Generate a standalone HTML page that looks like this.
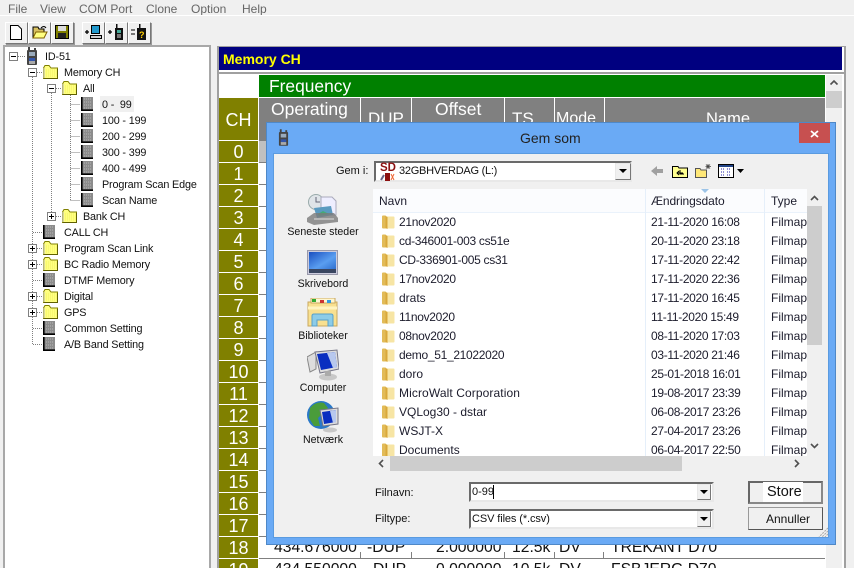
<!DOCTYPE html>
<html><head><meta charset="utf-8"><style>
html,body{margin:0;padding:0;background:#f0f0f0}
#r{position:relative;width:854px;height:568px;overflow:hidden;background:#f0f0f0;font-family:"Liberation Sans",sans-serif;font-size:12px;color:#111}
#r div,#r span,#r svg{position:absolute}
.t{white-space:nowrap;line-height:14px}
.m{color:#666;top:2px;font-size:12px}
.tb{top:22px;width:21px;height:20px;background:#f0f0f0;border:1px solid;border-color:#fff #777 #777 #fff;box-shadow:1px 1px 0 #999}
.tr{font-size:10.8px;letter-spacing:-.15px;color:#111;margin-top:1px}
.ch{left:219px;width:39px;height:21px;background:#808000;color:#fff;font-size:18px;line-height:22px;text-align:center}
.rl{left:259px;width:566px;height:1px;background:#808080}
.hd{top:98px;height:43px;background:#808080}
.ht{color:#fff;font-size:17.5px;line-height:20px;white-space:nowrap}
.v{font-size:15.7px;color:#111;white-space:nowrap;line-height:18px}
.n,.d,.y{white-space:nowrap;line-height:14px;color:#1c1c2c;font-size:12px}
.n{left:399px}.d{left:651px;letter-spacing:-.33px}.y{left:771px;width:36px;overflow:hidden}
.q{letter-spacing:-.3px}
.s{text-align:center;width:90px;left:278px;line-height:14px;white-space:nowrap;font-size:10.6px;color:#111}
.sk{background:#fff;border:2px solid;border-color:#6a6a6a #e8e8e8 #e8e8e8 #6a6a6a;box-sizing:border-box}
.db{width:16px;background:#f0f0f0;border:1px solid;border-color:#e8e8e8 #777 #777 #e8e8e8;box-sizing:border-box}
</style></head><body><div id="r">
<svg width="0" height="0" style="position:absolute"><defs>
<symbol id="doc" viewBox="0 0 13 14"><rect x="0" y="0" width="12" height="13" fill="#8c8c8c"/><path d="M.8 0V13.200H12" fill="none" stroke="#000" stroke-width="1.6"/><path d="M3 2h7M3 5h7M3 8h7M3 11h7" stroke="#b8b8b8" stroke-dasharray="1 1"/></symbol>
<symbol id="fo" viewBox="0 0 15 14"><path d="M.5 3V13.500H14.500V3H8L6 .5H2z" fill="#ffff80" stroke="#808000"/><path d="M1 3V13" stroke="#c8c8a0" stroke-width="1.500"/><path d="M3 5h11M3 7h11M3 9h11M3 11h11" stroke="#f0f060" stroke-dasharray="1 1"/><path d="M1 13.500H14.500V4" fill="none" stroke="#606000"/></symbol>
<symbol id="yf" viewBox="0 0 14 14"><path d="M1 1.500Q1 .5 2 .5H4.500L5.500 1.500V13.500H2Q1 13.500 1 12.500z" fill="#e2bb58"/><path d="M5.500 1.500H12.500Q13.500 1.500 13.500 2.500V12.500Q13.500 13.500 12.500 13.500H6z" fill="#f7e5a4"/><path d="M4.500 1L6.500 2V14L4.500 13z" fill="#d9a83a"/></symbol>
<symbol id="pl" viewBox="0 0 9 9"><rect x=".5" y=".5" width="8" height="8" fill="#fff" stroke="#808080"/><path d="M2 4.500h5M4.500 2v5" stroke="#000"/></symbol>
<symbol id="mi" viewBox="0 0 9 9"><rect x=".5" y=".5" width="8" height="8" fill="#fff" stroke="#808080"/><path d="M2 4.500h5" stroke="#000"/></symbol>
<symbol id="rad" viewBox="0 0 12 18"><rect x="1" y="3" width="10" height="15" rx="1" fill="#444"/><rect x="2" y="0" width="2" height="4" fill="#444"/><rect x="8" y="1" width="2" height="3" fill="#444"/><rect x="3" y="5" width="6" height="4" fill="#9ab"/><rect x="3" y="11" width="6" height="3" fill="#35a"/><rect x="3" y="14" width="6" height="3" fill="#aaa"/></symbol>
</defs></svg>

<!-- menu -->
<span class="t m" style="left:8px">File</span><span class="t m" style="left:40px">View</span><span class="t m" style="left:79px">COM Port</span><span class="t m" style="left:146px">Clone</span><span class="t m" style="left:191px">Option</span><span class="t m" style="left:242px">Help</span>
<div style="left:0;top:15px;width:854px;height:1px;background:#fff"></div>

<!-- toolbar -->
<div class="tb" style="left:5px"></div><div class="tb" style="left:28px"></div><div class="tb" style="left:51px"></div>
<div class="tb" style="left:82px"></div><div class="tb" style="left:105px"></div><div class="tb" style="left:128px"></div>
<svg style="left:10px;top:25px" width="12" height="15"><path d="M.5.5H8L11.500 4V14.500H.5z" fill="#fff" stroke="#000"/></svg>
<svg style="left:32px;top:25px" width="16" height="14"><path d="M1 2h5l1 2h5v9H1z" fill="#d8c060" stroke="#000"/><path d="M1 13L4 7H15L12 13z" fill="#ffff80" stroke="#806000"/><path d="M9 3Q12 0 14 3" stroke="#000" fill="none"/></svg>
<svg style="left:55px;top:25px" width="14" height="14"><rect x=".5" y=".5" width="13" height="13" fill="#808000" stroke="#000"/><rect x="3" y="1" width="8" height="5" fill="#ddd"/><rect x="3" y="8" width="8" height="5" fill="#222"/></svg>
<svg style="left:84px;top:25px" width="18" height="15"><path d="M1 7h4M3 5v4" stroke="#000" stroke-width="1.300"/><rect x="7.500" y=".5" width="8" height="8" fill="#29c" stroke="#000"/><rect x="6.500" y="10.500" width="11" height="3" fill="#ccc" stroke="#000"/></svg>
<svg style="left:107px;top:24px" width="18" height="17"><path d="M1 8h4M3 6v4" stroke="#000" stroke-width="1.300"/><rect x="8" y="4" width="8" height="12" fill="#111"/><rect x="9" y="0" width="1.500" height="4" fill="#111"/><rect x="10" y="6" width="4" height="3" fill="#4a9"/><path d="M10 11h4M10 13h4" stroke="#ddd"/></svg>
<svg style="left:130px;top:24px" width="18" height="17"><path d="M1 6h4M1 10h4" stroke="#000"/><rect x="7" y="4" width="9" height="12" fill="#111"/><rect x="9" y="0" width="1.500" height="4" fill="#111"/><text x="9" y="14" font-size="9" font-weight="bold" fill="#fc0" font-family="Liberation Sans">?</text></svg>

<!-- tree panel -->
<div style="left:3px;top:45px;width:204px;height:523px;background:#fff;border:2px solid #a8a8a8"></div>

<svg style="left:0;top:0" width="210" height="360"><g stroke="#808080" stroke-dasharray="1 1" fill="none">
<path d="M18 56.500h8M32.500 77V344M51.500 93V216M70.500 104.500h10M70.500 120.500h10M70.500 136.500h10M70.500 152.500h10M70.500 168.500h10M70.500 184.500h10M70.500 200.500h10M70.500 93V200M37 72.500h6M56 88.500h6M56 216.500h6M33 232.500h10M37 248.500h6M37 264.500h6M33 280.500h10M37 296.500h6M37 312.500h6M33 328.500h10M33 344.500h10"/></g></svg>
<svg style="left:9px;top:52px" width="9" height="9"><use href="#mi"/></svg>
<svg style="left:28px;top:68px" width="9" height="9"><use href="#mi"/></svg>
<svg style="left:47px;top:84px" width="9" height="9"><use href="#mi"/></svg>
<svg style="left:47px;top:212px" width="9" height="9"><use href="#pl"/></svg>
<svg style="left:28px;top:244px" width="9" height="9"><use href="#pl"/></svg>
<svg style="left:28px;top:260px" width="9" height="9"><use href="#pl"/></svg>
<svg style="left:28px;top:292px" width="9" height="9"><use href="#pl"/></svg>
<svg style="left:28px;top:308px" width="9" height="9"><use href="#pl"/></svg>
<svg style="left:26px;top:47px" width="12" height="18"><use href="#rad"/></svg>
<svg style="left:43px;top:65px" width="15" height="14"><use href="#fo"/></svg>
<svg style="left:62px;top:81px" width="15" height="14"><use href="#fo"/></svg>
<svg style="left:62px;top:209px" width="15" height="14"><use href="#fo"/></svg>
<svg style="left:43px;top:241px" width="15" height="14"><use href="#fo"/></svg>
<svg style="left:43px;top:257px" width="15" height="14"><use href="#fo"/></svg>
<svg style="left:43px;top:289px" width="15" height="14"><use href="#fo"/></svg>
<svg style="left:43px;top:305px" width="15" height="14"><use href="#fo"/></svg>
<svg style="left:81px;top:97px" width="13" height="14"><use href="#doc"/></svg>
<svg style="left:81px;top:113px" width="13" height="14"><use href="#doc"/></svg>
<svg style="left:81px;top:129px" width="13" height="14"><use href="#doc"/></svg>
<svg style="left:81px;top:145px" width="13" height="14"><use href="#doc"/></svg>
<svg style="left:81px;top:161px" width="13" height="14"><use href="#doc"/></svg>
<svg style="left:81px;top:177px" width="13" height="14"><use href="#doc"/></svg>
<svg style="left:81px;top:193px" width="13" height="14"><use href="#doc"/></svg>
<svg style="left:43px;top:225px" width="13" height="14"><use href="#doc"/></svg>
<svg style="left:43px;top:273px" width="13" height="14"><use href="#doc"/></svg>
<svg style="left:43px;top:321px" width="13" height="14"><use href="#doc"/></svg>
<svg style="left:43px;top:337px" width="13" height="14"><use href="#doc"/></svg>
<div style="left:100px;top:96px;width:34px;height:16px;background:#f0f0f0"></div>
<span class="t tr" style="left:45px;top:49px">ID-51</span>
<span class="t tr" style="left:64px;top:65px">Memory CH</span>
<span class="t tr" style="left:83px;top:81px">All</span>
<span class="t tr" style="left:102px;top:97px">0 -&nbsp; 99</span>
<span class="t tr" style="left:102px;top:113px">100 - 199</span>
<span class="t tr" style="left:102px;top:129px">200 - 299</span>
<span class="t tr" style="left:102px;top:145px">300 - 399</span>
<span class="t tr" style="left:102px;top:161px">400 - 499</span>
<span class="t tr" style="left:102px;top:177px">Program Scan Edge</span>
<span class="t tr" style="left:102px;top:193px">Scan Name</span>
<span class="t tr" style="left:83px;top:209px">Bank CH</span>
<span class="t tr" style="left:64px;top:225px">CALL CH</span>
<span class="t tr" style="left:64px;top:241px">Program Scan Link</span>
<span class="t tr" style="left:64px;top:257px">BC Radio Memory</span>
<span class="t tr" style="left:64px;top:273px">DTMF Memory</span>
<span class="t tr" style="left:64px;top:289px">Digital</span>
<span class="t tr" style="left:64px;top:305px">GPS</span>
<span class="t tr" style="left:64px;top:321px">Common Setting</span>
<span class="t tr" style="left:64px;top:337px">A/B Band Setting</span>

<!-- right panel -->
<div style="left:217px;top:46px;height:522px;background:#fff;border-left:2px solid #a0a0a0;border-right:2px solid #a0a0a0;box-sizing:border-box;width:629px"></div>
<div style="left:217px;top:46px;width:629px;height:1px;background:#a0a0a0"></div>
<div style="left:219px;top:47px;width:623px;height:23px;background:#000080"></div>
<span class="t" style="left:223px;top:52px;color:#ff0;font-weight:bold;font-size:14px">Memory CH</span>
<div style="left:217px;top:72px;width:629px;height:2px;background:#a0a0a0"></div>
<div style="left:259px;top:75px;width:566px;height:22px;background:#008000"></div>
<span class="t" style="left:269px;top:76px;color:#fff;font-size:17.400px;line-height:20px">Frequency</span>
<div class="hd" style="left:259px;width:101px"></div>
<div class="hd" style="left:361px;width:50px"></div>
<div class="hd" style="left:412px;width:92px"></div>
<div class="hd" style="left:505px;width:49px"></div>
<div class="hd" style="left:555px;width:49px"></div>
<div class="hd" style="left:605px;width:220px"></div>
<span class="ht" style="left:271px;top:99px">Operating</span>
<span class="ht" style="left:368px;top:109px;font-size:17px">DUP</span>
<span class="ht" style="left:435px;top:99px">Offset</span>
<span class="ht" style="left:512px;top:109px;font-size:17px">TS</span>
<span class="ht" style="left:556px;top:109px;font-size:16px">Mode</span>
<span class="ht" style="left:706px;top:109px;font-size:16.500px">Name</span>
<div class="ch" style="top:98px;height:42px;line-height:44px">CH</div>
<div style="left:259px;top:141px;width:8px;height:21px;background:#c0c0c0"></div>

<div class="ch" style="top:141px">0</div><div class="ch" style="top:163px">1</div><div class="ch" style="top:185px">2</div><div class="ch" style="top:207px">3</div><div class="ch" style="top:229px">4</div><div class="ch" style="top:251px">5</div><div class="ch" style="top:273px">6</div><div class="ch" style="top:295px">7</div><div class="ch" style="top:317px">8</div><div class="ch" style="top:339px">9</div><div class="ch" style="top:361px">10</div><div class="ch" style="top:383px">11</div><div class="ch" style="top:405px">12</div><div class="ch" style="top:427px">13</div><div class="ch" style="top:449px">14</div><div class="ch" style="top:471px">15</div><div class="ch" style="top:493px">16</div><div class="ch" style="top:515px">17</div><div class="ch" style="top:537px">18</div><div class="ch" style="top:559px">19</div>
<div class="rl" style="top:162px"></div><div class="rl" style="top:184px"></div><div class="rl" style="top:206px"></div><div class="rl" style="top:228px"></div><div class="rl" style="top:250px"></div><div class="rl" style="top:272px"></div><div class="rl" style="top:294px"></div><div class="rl" style="top:316px"></div><div class="rl" style="top:338px"></div><div class="rl" style="top:360px"></div><div class="rl" style="top:382px"></div><div class="rl" style="top:404px"></div><div class="rl" style="top:426px"></div><div class="rl" style="top:448px"></div><div class="rl" style="top:470px"></div><div class="rl" style="top:492px"></div><div class="rl" style="top:514px"></div><div class="rl" style="top:536px"></div><div class="rl" style="top:558px"></div>

<span class="v" style="left:274px;top:539px">434.676000</span><span class="v" style="left:367px;top:539px">-DUP</span><span class="v" style="left:436px;top:539px">2.000000</span><span class="v" style="left:512px;top:539px">12.5k</span><span class="v" style="left:559px;top:539px">DV</span><span class="v" style="left:611px;top:539px">TREKANT D70</span>
<span class="v" style="left:274px;top:561px">434.550000</span><span class="v" style="left:373px;top:561px">DUP</span><span class="v" style="left:436px;top:561px">0.000000</span><span class="v" style="left:512px;top:561px">10.5k</span><span class="v" style="left:559px;top:561px">DV</span><span class="v" style="left:611px;top:561px">FSBJERG D70</span>
<div style="left:360px;top:552px;width:1px;height:6px;background:#808080"></div><div style="left:411px;top:552px;width:1px;height:6px;background:#808080"></div><div style="left:504px;top:552px;width:1px;height:6px;background:#808080"></div><div style="left:554px;top:552px;width:1px;height:6px;background:#808080"></div><div style="left:603px;top:552px;width:1px;height:6px;background:#808080"></div>

<!-- outer scrollbar -->
<div style="left:826px;top:75px;width:16px;height:493px;background:#f0f0f0"></div>
<div style="left:826px;top:91px;width:16px;height:17px;background:#cdcdcd"></div>
<svg style="left:829px;top:79px" width="10" height="7"><path d="M1.500 5.500L5 2L8.500 5.500" fill="none" stroke="#505050" stroke-width="1.600"/></svg>

<!-- dialog -->
<div style="left:266px;top:122px;width:570px;height:423px;background:#6aaaf5;border:1px solid #4f88c7;box-sizing:border-box"></div>
<div style="left:273px;top:153px;width:556px;height:385px;background:#f0f0f0;border:1px solid #5a9be0;box-sizing:border-box"></div>
<div style="left:799px;top:123px;width:31px;height:20px;background:#c75050"></div>
<svg style="left:810px;top:130px" width="9" height="8"><path d="M1 1L8 7M8 1L1 7" stroke="#fff" stroke-width="1.800"/></svg>
<svg style="left:278px;top:129px" width="11" height="17"><use href="#rad"/></svg>
<span class="t" style="left:520px;top:130px;font-size:14px;line-height:16px;color:#222">Gem som</span>

<span class="t" style="left:336px;top:164px;font-size:11px">Gem i:</span>
<div class="sk" style="left:374px;top:161px;width:258px;height:21px"></div>
<span class="t" style="left:380px;top:163px;font-size:11.500px;font-weight:bold;color:#8b1010;line-height:10px">SD</span>
<svg style="left:380px;top:172px" width="15" height="9"><rect x="5" y="1" width="5" height="8" fill="#8b1010"/><path d="M1 8L4 3" stroke="#668" stroke-width="2"/><path d="M11 2l3 6M14 2l-3 6" stroke="#e63" /></svg>
<span class="t" style="left:399px;top:164px;font-size:11px;letter-spacing:-.25px">32GBHVERDAG (L:)</span>
<div class="db" style="left:615px;top:163px;height:17px"></div>
<svg style="left:619px;top:169px" width="9" height="5"><path d="M0 0H8L4 4z" fill="#000"/></svg>

<svg style="left:651px;top:165px" width="13" height="12"><path d="M0 6L6 1V4H12V8H6V11z" fill="#a0a0a0"/></svg>
<svg style="left:672px;top:164px" width="16" height="14"><path d="M.5 2.500H6L7 4H15.500V13.500H.5z" fill="#ffff90" stroke="#000"/><path d="M5 9H11M7 7L5 9L7 11M5 9" stroke="#000" fill="none"/><path d="M8 6V10H12" stroke="#000" fill="none"/></svg>
<svg style="left:695px;top:163px" width="17" height="15"><path d="M.5 5.500H5L6 7H11.500V14.500H.5z" fill="#ffe878" stroke="#555"/><path d="M13 1V6M10.500 3.500H16M11 1.500L15 5.500M15 1.500L11 5.500" stroke="#444" stroke-width=".8"/></svg>
<svg style="left:718px;top:164px" width="26" height="14"><rect x=".5" y=".5" width="15" height="13" fill="#fff" stroke="#000"/><rect x="1" y="1" width="14" height="2" fill="#248"/><path d="M3 5h3M9 5h4M3 8h3M9 8h4M3 11h3M9 11h4" stroke="#22a" stroke-dasharray="1 1"/><path d="M19 5H26L22.500 9z" fill="#000"/></svg>

<!-- side places -->
<svg style="left:306px;top:193px" width="33" height="33"><circle cx="10" cy="9" r="7.500" fill="#dfe4e8" stroke="#9aa"/><path d="M10 4V9H14" stroke="#667" fill="none"/><path d="M15 4H26L30 8V22H15z" fill="#eef" stroke="#aab"/><path d="M8 15L25 13L27 22L11 25z" fill="#5a9ac0"/><path d="M12 21l5-3 6 3-10 2z" fill="#4a7"/><path d="M1 25L8 20H28L32 25V29L8 32L1 29z" fill="#7b7b7b" opacity=".8"/><path d="M8 26H28" stroke="#ddd"/></svg>
<span class="s" style="top:225px">Seneste steder</span>
<svg style="left:307px;top:250px" width="32" height="26"><rect x=".5" y=".5" width="30" height="24" fill="#ccd" stroke="#99a"/><defs><linearGradient id="g" x1="0" y1="0" x2="1" y2="1"><stop offset="0" stop-color="#1a4fc0"/><stop offset=".6" stop-color="#5a9ef0"/><stop offset="1" stop-color="#3070d0"/></linearGradient></defs><rect x="2" y="2" width="27" height="17" fill="url(#g)"/><rect x="2" y="19" width="27" height="4" fill="#3a4660"/></svg>
<span class="s" style="top:277px">Skrivebord</span>
<svg style="left:307px;top:298px" width="32" height="30"><path d="M1 4H30V28H1z" fill="#f8e090" stroke="#c8a860"/><rect x="4" y="0" width="24" height="5" fill="#fff6d0" stroke="#c8a860"/><rect x="5" y="1" width="4" height="3" fill="#3a3"/><rect x="13" y="2" width="4" height="3" fill="#c33"/><rect x="20" y="2" width="4" height="3" fill="#39d"/><path d="M1 10H30" stroke="#fff4c0" stroke-width="3"/><path d="M5 28V18Q5 16 7 16H24Q26 16 26 18V28H21V22H10V28z" fill="#8ccce8" stroke="#58a0c8"/></svg>
<span class="s" style="top:329px">Biblioteker</span>
<svg style="left:307px;top:349px" width="32" height="32"><path d="M0 8L9 3V20L3 23z" fill="#ddd" stroke="#888"/><path d="M8 3L30 1L32 20L13 24z" fill="#ddd" stroke="#778"/><path d="M10 5L28 3L30 18L14 21z" fill="#0a2ec0"/><path d="M20 4L28 3L30 18L26 19z" fill="#b8c8ee"/><ellipse cx="21" cy="28" rx="9" ry="3.500" fill="#c8c8c8"/><rect x="18" y="22" width="6" height="5" fill="#aaa"/></svg>
<span class="s" style="top:381px">Computer</span>
<svg style="left:306px;top:400px" width="33" height="33"><circle cx="15" cy="15" r="14" fill="#2a78c8"/><path d="M4 8Q10 1 18 3L22 8L12 18L14 26L8 26L3 18z" fill="#4a9c3a"/><path d="M14 10L32 8V24L17 26z" fill="#ddd" stroke="#778"/><path d="M16 12L30 10V22L18 24z" fill="#0a2ec0"/><path d="M24 11L30 10V22L27 23z" fill="#b8c8ee"/><ellipse cx="24" cy="30" rx="7" ry="2.500" fill="#c8c8c8"/></svg>
<span class="s" style="top:433px">Netværk</span>

<!-- list -->
<div style="left:373px;top:189px;width:449px;height:267px;background:#fff;overflow:hidden">
<div style="left:0;top:0;width:434px;height:23px;background:#fbfcfe"></div>
<div style="left:0;top:23px;width:434px;height:1px;background:#eaf2fb"></div>
<div style="left:272px;top:0;width:1px;height:267px;background:#e5effa"></div>
<div style="left:391px;top:0;width:1px;height:267px;background:#e5effa"></div>
</div>
<svg style="left:701px;top:189px" width="9" height="5"><path d="M0 0H8L4 4z" fill="#9cc4e8"/></svg>
<span class="n" style="left:379px;top:194px">Navn</span><span class="d" style="top:194px;letter-spacing:-.1px">Ændringsdato</span><span class="y" style="top:194px">Type</span>

<svg style="left:381px;top:215px" width="14" height="14"><use href="#yf"/></svg><span class="n q" style="top:215px">21nov2020</span><span class="d" style="top:215px">21-11-2020 16:08</span><span class="y" style="top:215px">Filmap</span>
<svg style="left:381px;top:234px" width="14" height="14"><use href="#yf"/></svg><span class="n q" style="top:234px">cd-346001-003 cs51e</span><span class="d" style="top:234px">20-11-2020 23:18</span><span class="y" style="top:234px">Filmap</span>
<svg style="left:381px;top:253px" width="14" height="14"><use href="#yf"/></svg><span class="n q" style="top:253px">CD-336901-005 cs31</span><span class="d" style="top:253px">17-11-2020 22:42</span><span class="y" style="top:253px">Filmap</span>
<svg style="left:381px;top:272px" width="14" height="14"><use href="#yf"/></svg><span class="n q" style="top:272px">17nov2020</span><span class="d" style="top:272px">17-11-2020 22:36</span><span class="y" style="top:272px">Filmap</span>
<svg style="left:381px;top:291px" width="14" height="14"><use href="#yf"/></svg><span class="n" style="top:291px">drats</span><span class="d" style="top:291px">17-11-2020 16:45</span><span class="y" style="top:291px">Filmap</span>
<svg style="left:381px;top:310px" width="14" height="14"><use href="#yf"/></svg><span class="n q" style="top:310px">11nov2020</span><span class="d" style="top:310px">11-11-2020 15:49</span><span class="y" style="top:310px">Filmap</span>
<svg style="left:381px;top:329px" width="14" height="14"><use href="#yf"/></svg><span class="n q" style="top:329px">08nov2020</span><span class="d" style="top:329px">08-11-2020 17:03</span><span class="y" style="top:329px">Filmap</span>
<svg style="left:381px;top:348px" width="14" height="14"><use href="#yf"/></svg><span class="n q" style="top:348px">demo_51_21022020</span><span class="d" style="top:348px">03-11-2020 21:46</span><span class="y" style="top:348px">Filmap</span>
<svg style="left:381px;top:367px" width="14" height="14"><use href="#yf"/></svg><span class="n" style="top:367px">doro</span><span class="d" style="top:367px">25-01-2018 16:01</span><span class="y" style="top:367px">Filmap</span>
<svg style="left:381px;top:386px" width="14" height="14"><use href="#yf"/></svg><span class="n" style="top:386px;letter-spacing:.1px">MicroWalt Corporation</span><span class="d" style="top:386px">19-08-2017 23:39</span><span class="y" style="top:386px">Filmap</span>
<svg style="left:381px;top:405px" width="14" height="14"><use href="#yf"/></svg><span class="n" style="top:405px">VQLog30 - dstar</span><span class="d" style="top:405px">06-08-2017 23:26</span><span class="y" style="top:405px">Filmap</span>
<svg style="left:381px;top:424px" width="14" height="14"><use href="#yf"/></svg><span class="n" style="top:424px">WSJT-X</span><span class="d" style="top:424px">27-04-2017 23:26</span><span class="y" style="top:424px">Filmap</span>
<svg style="left:381px;top:443px" width="14" height="14"><use href="#yf"/></svg><span class="n" style="top:443px">Documents</span><span class="d" style="top:443px">06-04-2017 22:50</span><span class="y" style="top:443px">Filmap</span>

<!-- list scrollbars -->
<div style="left:807px;top:189px;width:15px;height:267px;background:#f0f0f0"></div>
<div style="left:807px;top:206px;width:15px;height:139px;background:#cdcdcd"></div>
<svg style="left:810px;top:195px" width="9" height="6"><path d="M1 5L4.500 1.500L8 5" fill="none" stroke="#505050" stroke-width="1.600"/></svg>
<svg style="left:810px;top:443px" width="9" height="6"><path d="M1 1L4.500 4.500L8 1" fill="none" stroke="#505050" stroke-width="1.600"/></svg>
<div style="left:373px;top:456px;width:449px;height:15px;background:#f0f0f0"></div>
<div style="left:390px;top:456px;width:292px;height:15px;background:#cdcdcd"></div>
<svg style="left:378px;top:459px" width="6" height="9"><path d="M5 1L1.500 4.500L5 8" fill="none" stroke="#505050" stroke-width="1.600"/></svg>
<svg style="left:794px;top:459px" width="6" height="9"><path d="M1 1L4.500 4.500L1 8" fill="none" stroke="#505050" stroke-width="1.600"/></svg>

<!-- bottom form -->
<span class="t" style="left:375px;top:486px;font-size:11px">Filnavn:</span>
<span class="t" style="left:375px;top:512px;font-size:11px">Filtype:</span>
<div class="sk" style="left:469px;top:482px;width:245px;height:20px"></div>
<span class="t" style="left:472px;top:485px;font-size:11px">0-99</span>
<div style="left:493px;top:485px;width:1px;height:14px;background:#000"></div>
<div class="db" style="left:697px;top:484px;height:16px;width:14px"></div>
<svg style="left:700px;top:490px" width="9" height="5"><path d="M0 0H8L4 4z" fill="#000"/></svg>
<div class="sk" style="left:469px;top:509px;width:245px;height:20px"></div>
<span class="t" style="left:472px;top:512px;font-size:11px;letter-spacing:-.1px">CSV files (*.csv)</span>
<div class="db" style="left:697px;top:511px;height:16px;width:14px"></div>
<svg style="left:700px;top:517px" width="9" height="5"><path d="M0 0H8L4 4z" fill="#000"/></svg>

<div style="left:748px;top:481px;width:75px;height:23px;box-sizing:border-box;background:#f0f0f0;border:2px solid;border-color:#666 #888 #888 #666"></div>
<div style="left:763px;top:482px;width:40px;height:20px;background:#fff"></div>
<span class="t" style="left:767px;top:485px;font-size:14.500px;line-height:15px">Store</span>
<div style="left:748px;top:507px;width:75px;height:23px;box-sizing:border-box;background:#f0f0f0;border:1px solid;border-color:#999 #555 #555 #999"></div>
<span class="t" style="left:766px;top:512px;font-size:12px">Annuller</span>
<svg style="left:817px;top:526px" width="12" height="12"><path d="M11 2L2 11M11 5L5 11M11 8L8 11" stroke="#a8a8a8" stroke-dasharray="2 1"/></svg>
</div></body></html>
